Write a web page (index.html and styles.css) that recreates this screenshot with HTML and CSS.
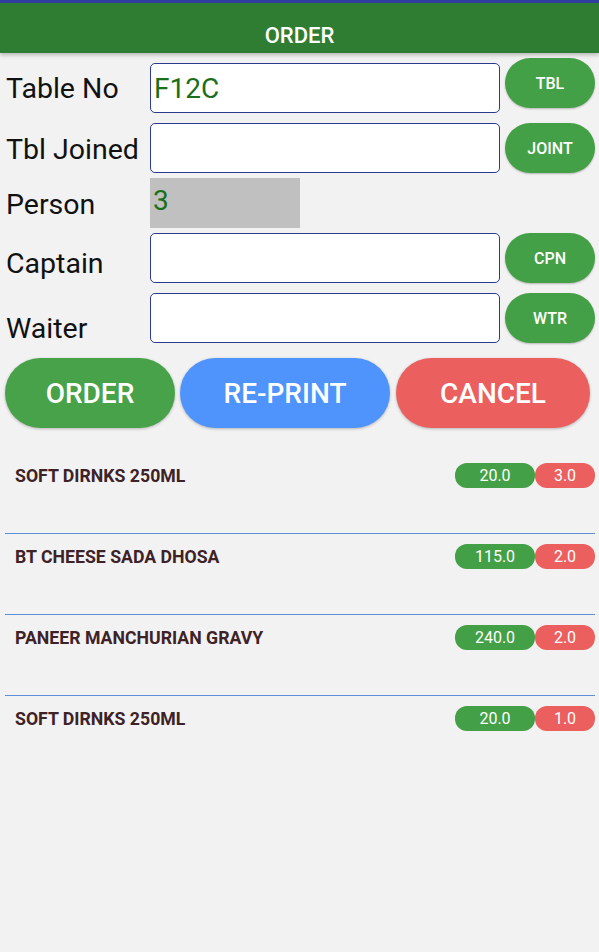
FILE: index.html
```html
<!DOCTYPE html>
<html lang="en">
<head>
    <meta charset="UTF-8">
    <meta name="viewport" content="width=device-width, initial-scale=1.0">
    <title>Order</title>
    <link rel="stylesheet" href="styles.css">
</head>
<body>

    <div class="topbar">ORDER</div>

    <div class="form">
        <div class="row row-first">
            <label class="lbl">Table No</label>
            <input class="field field-low" type="text" value="F12C">
            <button class="side-btn">TBL</button>
        </div>
        <div class="row row-joined">
            <label class="lbl lbl-joined">Tbl Joined</label>
            <input class="field" type="text" value="">
            <button class="side-btn">JOINT</button>
        </div>
        <div class="row row-person">
            <label class="lbl lbl-person">Person</label>
            <div class="person-box">3</div>
        </div>
        <div class="row row-captain">
            <label class="lbl lbl-captain">Captain</label>
            <input class="field" type="text" value="">
            <button class="side-btn">CPN</button>
        </div>
        <div class="row row-waiter">
            <label class="lbl lbl-waiter">Waiter</label>
            <input class="field" type="text" value="">
            <button class="side-btn">WTR</button>
        </div>
    </div>

    <div class="actions">
        <button class="big-btn btn-order">ORDER</button>
        <button class="big-btn btn-reprint">RE-PRINT</button>
        <button class="big-btn btn-cancel">CANCEL</button>
    </div>

    <div class="items">
        <div class="item">
            <span class="item-name">SOFT DIRNKS 250ML</span>
            <span class="pill pill-rate">20.0</span>
            <span class="pill pill-qty">3.0</span>
        </div>
        <div class="item">
            <span class="item-name">BT CHEESE SADA DHOSA</span>
            <span class="pill pill-rate">115.0</span>
            <span class="pill pill-qty">2.0</span>
        </div>
        <div class="item">
            <span class="item-name">PANEER MANCHURIAN GRAVY</span>
            <span class="pill pill-rate">240.0</span>
            <span class="pill pill-qty">2.0</span>
        </div>
        <div class="item">
            <span class="item-name">SOFT DIRNKS 250ML</span>
            <span class="pill pill-rate">20.0</span>
            <span class="pill pill-qty">1.0</span>
        </div>
    </div>

</body>
</html>
```

FILE: styles.css
```css
body { margin: 0; background-color: #f2f2f2; font-family: Roboto, "Noto Sans", sans-serif; }

.topbar { border-top: 3px solid #303f9f; background-color: #2e7d32; color: white; text-align: center; font-size: 22px; font-weight: 500; line-height: 22px; padding: 22px 0 6px; box-shadow: 0 2px 4px rgba(0, 0, 0, 0.25); position: relative; }

.form { padding: 0 4px 0 6px; }
.row { display: flex; align-items: flex-start; height: 50px; }
.row-first { margin-top: 5px; height: 55px; }
.row-joined { margin-top: 10px; }
.row-person { margin-top: 5px; }
.row-captain { margin-top: 5px; }
.row-waiter { margin-top: 10px; }

.lbl { width: 144px; font-size: 28.5px; line-height: 50px; color: #111; margin-top: 6px; white-space: nowrap; }
.lbl-joined { margin-top: 2px; }
.lbl-person { margin-top: 2px; }
.lbl-captain { margin-top: 6px; }
.lbl-waiter { margin-top: 11px; }

.field { box-sizing: border-box; width: 350px; height: 50px; margin: 0; border: 1px solid #2b3a8c; border-radius: 5px; background: white; padding: 0 3px; font-family: Roboto, sans-serif; font-size: 28px; color: #1a701a; outline: none; }
.field-low { margin-top: 5px; }

.person-box { width: 150px; height: 50px; background-color: #c0c0c0; color: #1a701a; font-size: 28px; line-height: 46px; padding-left: 3px; box-sizing: border-box; }

.side-btn { width: 90px; height: 50px; margin-left: 5px; border: none; border-radius: 25px; background-color: #43a047; color: white; font-family: Roboto, sans-serif; font-size: 16px; font-weight: 500; box-shadow: 0 1px 2px rgba(0, 0, 0, 0.25); padding: 0; }

.actions { display: flex; padding: 15px 0 0 5px; gap: 5px; }
.big-btn { height: 70px; border: none; border-radius: 35px; color: white; font-family: Roboto, sans-serif; font-size: 28px; font-weight: 500; box-shadow: 0 1px 3px rgba(0, 0, 0, 0.25); padding: 0; }
.btn-order { width: 170px; background-color: #48a24a; }
.btn-reprint { width: 210px; background-color: #4f93fc; }
.btn-cancel { width: 194px; margin-left: 1px; background-color: #eb5f5f; }

.items { padding: 25px 4px 0 5px; }
.item { display: flex; align-items: center; padding: 10px 0 45px; }
.item + .item { border-top: 1px solid #5b8fd8; }
.item-name { flex: 1; padding-left: 10px; font-size: 17.7px; font-weight: bold; color: #3e2226; }
.pill { height: 25px; line-height: 25px; border-radius: 12px; color: white; font-size: 16px; text-align: center; }
.pill-rate { width: 80px; background-color: #43a047; }
.pill-qty { width: 60px; background-color: #eb5f5f; }
```
